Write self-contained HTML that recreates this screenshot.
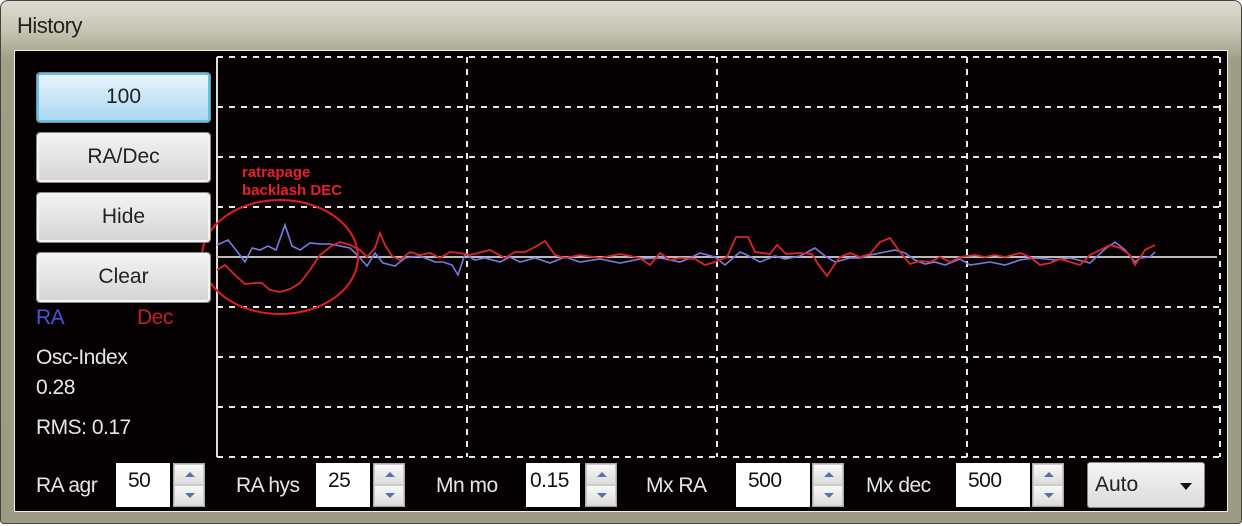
<!DOCTYPE html>
<html><head><meta charset="utf-8"><style>
*{margin:0;padding:0;box-sizing:border-box}
body{width:1242px;height:526px;overflow:hidden;background:#fff;font-family:"Liberation Sans",sans-serif;position:relative}
.frame{position:absolute;left:0;top:0;width:1242px;height:524px;border-radius:8px 8px 4px 4px;background:linear-gradient(#dedcd2 0,#c6c4b2 30px,#9f9d84 60px,#9c9a80 100%);border:1px solid #444}
.t{position:absolute;font-size:21px;white-space:nowrap;letter-spacing:-0.5px}
.black{position:absolute;left:14px;top:50px;width:1214px;height:462px;background:#060203;border:1px solid #eee}
.btn{position:absolute;left:37px;width:173px;height:49px;border:2px solid #f4f4f4;outline:1px solid #888;background:linear-gradient(#f2f2f2,#e4e4e4 50%,#d5d5d5);text-align:center;line-height:44px;font-size:21px;color:#222;border-radius:3px}
.btn.sel{background:linear-gradient(#e8f5fc,#c9e6f6 50%,#a9d8f0);border-color:#5ec4ec}
.lab{color:#e6e6e6}
.inp{position:absolute;top:463px;height:44px;background:#fff;font-size:21px;color:#111;padding:6px 0 0 12px;letter-spacing:-0.5px}
.spin{position:absolute;top:463px;width:32px;height:44px;background:#eee;border:1px solid #aaa}
.spin div{height:21px;border:1px solid #ccc;background:linear-gradient(#f8f8f8,#dcdcdc);position:relative}
.spin div:after{content:"";position:absolute;left:10px;top:7px;border:5px solid transparent}
.spin .u:after{border-bottom:5px solid #5a6fae;top:2px}
.spin .d:after{border-top:5px solid #5a6fae;top:7px}
</style></head><body>
<div class="frame"></div>
<div class="t" style="left:17px;top:13px;color:#222;font-size:22px">History</div>
<div class="black"></div>
<svg style="position:absolute;left:0;top:0" width="1242" height="526">
<g stroke="#e8e8e8" stroke-width="2" stroke-dasharray="6,6" fill="none">
<line x1="217" y1="57" x2="1221" y2="57"/><line x1="217" y1="107" x2="1221" y2="107"/><line x1="217" y1="157" x2="1221" y2="157"/><line x1="217" y1="207" x2="1221" y2="207"/>
<line x1="217" y1="307" x2="1221" y2="307"/><line x1="217" y1="357" x2="1221" y2="357"/><line x1="217" y1="407" x2="1221" y2="407"/><line x1="217" y1="457" x2="1221" y2="457"/>
<line x1="467" y1="57" x2="467" y2="457"/><line x1="717" y1="57" x2="717" y2="457"/><line x1="967" y1="57" x2="967" y2="457"/><line x1="1220" y1="57" x2="1220" y2="457"/>
</g>
<line x1="217" y1="57" x2="217" y2="457" stroke="#ddd" stroke-width="2"/>
<line x1="217" y1="257" x2="1217" y2="257" stroke="#bbb" stroke-width="2"/>
<polyline fill="none" stroke="#7a7ae0" stroke-width="1.6" points="217,245 228,240 236,250 245,262 252,248 260,250 268,246 276,250 285,225 292,246 300,250 310,243 320,244 330,244 340,246 350,248 360,258 367,266 375,253 383,263 395,266 405,258 420,256 435,262 443,262 452,265 458,275 465,254 475,260 485,258 500,262 510,257 520,262 535,258 550,263 565,257 580,262 600,259 620,263 640,259 660,258 680,262 690,258 700,253 715,257 725,265 740,252 745,254 760,262 775,256 785,259 800,256 815,248 825,256 835,262 850,258 860,258 870,255 885,252 895,250 905,253 915,260 925,264 935,262 945,265 960,259 970,265 990,262 1005,265 1020,260 1035,258 1055,260 1070,258 1090,263 1105,249 1115,242 1125,250 1135,262 1140,258 1150,257 1155,252"/>
<polyline fill="none" stroke="#d8262e" stroke-width="1.8" points="217,270 225,265 235,275 245,284 255,283 262,283 270,290 280,292 290,289 300,283 310,270 320,255 330,247 340,242 350,245 360,250 367,257 375,248 380,233 385,245 392,256 400,260 410,252 420,255 430,253 440,258 450,252 460,253 470,255 490,250 505,258 515,252 525,252 535,247 545,241 555,255 565,258 580,255 600,258 620,254 640,258 650,265 660,253 670,260 680,258 695,259 705,265 715,262 727,257 736,237 748,237 755,252 770,254 777,245 786,254 800,253 812,254 818,264 827,276 835,264 840,257 850,253 860,257 870,254 880,242 890,238 900,252 910,264 920,261 930,262 940,257 950,262 960,257 975,255 985,257 995,255 1005,257 1020,253 1030,257 1040,265 1050,263 1060,259 1070,262 1080,265 1090,255 1100,250 1110,245 1120,248 1130,255 1135,265 1145,250 1155,245"/>
<ellipse cx="280" cy="257" rx="78" ry="57" fill="none" stroke="#e01c24" stroke-width="2"/>
</svg>
<div class="t" style="left:242px;top:164px;font-size:15px;font-weight:bold;color:#e8202a;line-height:18px;letter-spacing:0">ratrapage<br>backlash DEC</div>
<div class="btn sel" style="top:73px">100</div>
<div class="btn" style="top:133px">RA/Dec</div>
<div class="btn" style="top:193px">Hide</div>
<div class="btn" style="top:253px">Clear</div>
<div class="t" style="left:36px;top:306px;color:#5050d8">RA</div>
<div class="t" style="left:137px;top:306px;color:#c0202a">Dec</div>
<div class="t lab" style="left:36px;top:346px">Osc-Index</div>
<div class="t lab" style="left:36px;top:376px">0.28</div>
<div class="t lab" style="left:36px;top:416px">RMS: 0.17</div>
<div class="t lab" style="left:36px;top:474px">RA agr</div>
<div class="inp" style="left:116px;width:54px">50</div>
<div class="spin" style="left:173px"><div class="u"></div><div class="d"></div></div>
<div class="t lab" style="left:236px;top:474px">RA hys</div>
<div class="inp" style="left:316px;width:54px">25</div>
<div class="spin" style="left:373px"><div class="u"></div><div class="d"></div></div>
<div class="t lab" style="left:436px;top:474px">Mn mo</div>
<div class="inp" style="left:526px;width:54px;padding-left:4px">0.15</div>
<div class="spin" style="left:585px"><div class="u"></div><div class="d"></div></div>
<div class="t lab" style="left:646px;top:474px">Mx RA</div>
<div class="inp" style="left:736px;width:74px">500</div>
<div class="spin" style="left:812px"><div class="u"></div><div class="d"></div></div>
<div class="t lab" style="left:866px;top:474px">Mx dec</div>
<div class="inp" style="left:956px;width:74px">500</div>
<div class="spin" style="left:1032px"><div class="u"></div><div class="d"></div></div>
<div style="position:absolute;left:1087px;top:462px;width:118px;height:46px;border:1px solid #888;border-radius:3px;background:linear-gradient(#f4f4f4,#dcdcdc);font-size:21px;color:#222;padding:10px 0 0 7px">Auto<span style="position:absolute;right:12px;top:20px;border:6px solid transparent;border-top:7px solid #111"></span></div>
</body></html>
